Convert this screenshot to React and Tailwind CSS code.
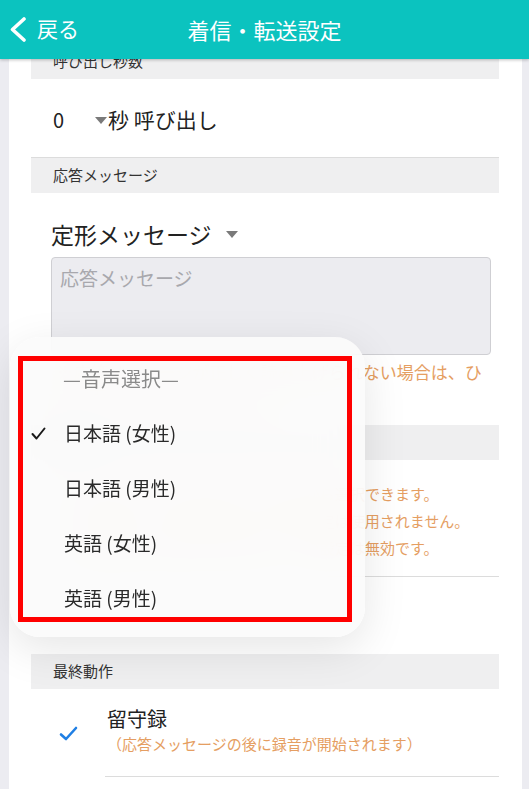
import React from "react";

const orange = "text-[#e59e62]";

const SectionHeader = ({ label }) => (
  <div className="h-[35px] bg-[#efeff0] flex items-center pl-[22px] text-[15px] text-[#333]">
    {label}
  </div>
);

const Caret = ({ className = "" }) => (
  <svg width="12" height="7" viewBox="0 0 12 7" className={className}>
    <path d="M0 0h12L6 7z" fill="#7a7a7a" />
  </svg>
);

const VoicePopup = () => {
  const options = ["日本語 (女性)", "日本語 (男性)", "英語 (女性)", "英語 (男性)"];
  return (
    <div className="absolute left-[10px] top-[337px] w-[355px] h-[300px] rounded-[30px] bg-[#fbfbfb]/90 backdrop-blur-xl shadow-[0_12px_44px_rgba(0,0,0,0.10)]">
      <div className="pt-[14px]">
        <div className="h-[55px] flex items-center pl-[53px] text-[20px] text-[#8a8a8a]">
          —音声選択—
        </div>
        {options.map((o, i) => (
          <div key={o} className="h-[55px] flex items-center text-[19px] text-[#2a2a2a]">
            <div className="w-[54px] flex justify-center pl-[2px]">
              {i === 0 && (
                <svg width="15" height="13" viewBox="0 0 15 13">
                  <path d="M1.5 7l4 4.5L13.5 1.5" fill="none" stroke="#1a1a1a" strokeWidth="2" strokeLinecap="round" strokeLinejoin="round" />
                </svg>
              )}
            </div>
            <span>{o}</span>
          </div>
        ))}
      </div>
      {/* 赤枠 */}
      <div className="absolute left-[8px] top-[19px] w-[334px] h-[266px] border-[5px] border-[#ff0000] pointer-events-none" />
    </div>
  );
};

export default function App() {
  return (
    <div className="relative w-[529px] h-[789px] overflow-hidden bg-[#ececf1] font-['Noto_Sans_CJK_JP',sans-serif]">
      {/* ナビ */}
      <div className="absolute top-0 left-0 right-0 z-20 h-[59px] bg-[#0bc3bf] shadow-[0_1px_3px_rgba(0,0,0,0.25)] flex items-center text-white">
        <div className="flex items-center pl-[9px] gap-[10px]">
          <svg width="18" height="25" viewBox="0 0 18 25">
            <path d="M15 2L3.5 12.5 15 23" fill="none" stroke="white" strokeWidth="3.6" strokeLinecap="round" strokeLinejoin="round" />
          </svg>
          <span className="text-[21px] leading-none -mt-[2px]">戻る</span>
        </div>
        <div className="absolute left-0 right-0 text-center text-[22px] leading-none -mt-[2px] pointer-events-none">
          着信・転送設定
        </div>
      </div>

      {/* 本文 */}
      <div className="ml-[9px] mr-[7px] h-full bg-white pl-[22px] pr-[23px] pt-[44px] text-[#222]">
        <SectionHeader label="呼び出し秒数" />
        <div className="h-[79px] border-b border-[#dcdcdc] flex items-center pl-[22px] text-[20px] pt-[3px]">
          <span>0</span>
          <Caret className="ml-[31px] mt-[1px]" />
          <span className="ml-[1px] text-[21px]">秒 呼び出し</span>
        </div>

        <SectionHeader label="応答メッセージ" />
        <div className="pt-[29px] pb-[14px] pl-[20px] pr-[8px]">
          <div className="flex items-center h-[24px] text-[23px] leading-[24px]">
            <span>定形メッセージ</span>
            <Caret className="ml-[14px]" />
          </div>
          <div className="mt-[11px] h-[98px] rounded-[4px] border border-[#cfcfd3] bg-[#ececf0] px-[8px] pt-[6px] text-[19px] text-[#a8a8ad]">
            応答メッセージ
          </div>
          <div className={`mt-[4px] pl-[6px] text-[17px] leading-[26px] whitespace-nowrap ${orange}`}>
            <div>※応答メッセージが正しく読み上げられない場合は、ひ</div>
            <div>らがなで入力してください。</div>
          </div>
        </div>

        <SectionHeader label="音声" />
        <div className={`pt-[20px] pb-[15px] pl-[34px] border-b border-[#dcdcdc] text-[15px] leading-[27px] whitespace-nowrap ${orange}`}>
          <div>※音声は日本語・英語、女性・男性から選択できます。</div>
          <div>※録音メッセージ選択時はこの音声設定は使用されません。</div>
          <div>※留守録以外を選択した場合は、この設定は無効です。</div>
        </div>
        <div className="h-[77px]" />

        <SectionHeader label="最終動作" />
        <div className="flex">
          <div className="w-[74px] flex justify-center pt-[37px]">
            <svg width="19" height="15" viewBox="0 0 19 15">
              <path d="M2 8.5l5 4.5L17 2" fill="none" stroke="#1f7fe4" strokeWidth="2.6" strokeLinecap="round" strokeLinejoin="round" />
            </svg>
          </div>
          <div className="flex-1 border-b border-[#dcdcdc] pt-[17px] pb-[20px] pl-[2px]">
            <div className="text-[20px] leading-[26px]">留守録</div>
            <div className={`text-[15px] leading-[24px] ${orange}`}>
              （応答メッセージの後に録音が開始されます）
            </div>
          </div>
        </div>
      </div>

      <VoicePopup />
    </div>
  );
}
